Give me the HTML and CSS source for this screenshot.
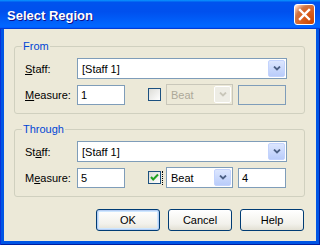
FILE: index.html
```html
<!DOCTYPE html>
<html lang="en">
<head>
  <meta charset="UTF-8" />
  <title>Select Region</title>
  <link rel="stylesheet" href="styles.css">
</head>
<body>
<div class="window">

  <div class="titlebar">
    <span class="title">Select Region</span>
    <span class="close">
      <svg width="13" height="13" viewBox="0 0 13 13"><path d="M2 2 L11 11 M11 2 L2 11" stroke="#fff" stroke-width="2.4" stroke-linecap="square"/></svg>
    </span>
  </div>

  <div class="client">

    <!-- From -->
    <fieldset class="group">
      <legend>From</legend>
      <div class="row">
        <label class="lbl"><u>S</u>taff:</label>
        <div class="combo wide">
          <span class="combo-text">[Staff 1]</span>
          <span class="combo-btn"><svg width="8" height="5" viewBox="0 0 8 5"><path d="M1 0.5 L4 3.5 L7 0.5" fill="none" stroke-width="1.8"/></svg></span>
        </div>
      </div>
      <div class="row">
        <label class="lbl"><u>M</u>easure:</label>
        <div class="field num">1</div>
        <span class="check"></span>
        <div class="combo beat disabled">
          <span class="combo-text">Beat</span>
          <span class="combo-btn"><svg width="8" height="5" viewBox="0 0 8 5"><path d="M1 0.5 L4 3.5 L7 0.5" fill="none" stroke-width="1.8"/></svg></span>
        </div>
        <div class="field num small disabled"></div>
      </div>
    </fieldset>

    <!-- Through -->
    <fieldset class="group second">
      <legend>Through</legend>
      <div class="row">
        <label class="lbl">St<u>a</u>ff:</label>
        <div class="combo wide">
          <span class="combo-text">[Staff 1]</span>
          <span class="combo-btn"><svg width="8" height="5" viewBox="0 0 8 5"><path d="M1 0.5 L4 3.5 L7 0.5" fill="none" stroke-width="1.8"/></svg></span>
        </div>
      </div>
      <div class="row">
        <label class="lbl">M<u>e</u>asure:</label>
        <div class="field num">5</div>
        <span class="check checked">
          <svg width="11" height="11" viewBox="0 0 11 11"><path d="M2 5 L4.2 7.5 L9 2.5" fill="none" stroke="#21A121" stroke-width="2"/></svg>
        </span>
        <span class="focus-mark"></span>
        <div class="combo beat">
          <span class="combo-text">Beat</span>
          <span class="combo-btn"><svg width="8" height="5" viewBox="0 0 8 5"><path d="M1 0.5 L4 3.5 L7 0.5" fill="none" stroke-width="1.8"/></svg></span>
        </div>
        <div class="field num small">4</div>
      </div>
    </fieldset>

    <div class="buttons">
      <button class="btn default">OK</button>
      <button class="btn">Cancel</button>
      <button class="btn">Help</button>
    </div>

  </div>
</div>
</body>
</html>
```

FILE: styles.css
```css
* {
  margin: 0;
  padding: 0;
  box-sizing: border-box;
}

body {
  font-family: 'Liberation Sans', Arial, sans-serif;
  font-size: 11px;
  color: #000;
  background: #fff;
}

.window {
  width: 320px;
  height: 245px;
  display: flex;
  flex-direction: column;
  background: #0055E5;
  box-shadow: inset 1px 0 0 #0831D9, inset -1px 0 0 #001EA0, inset 0 -1px 0 #001EA0;
}

/* Title bar */
.titlebar {
  height: 29px;
  display: flex;
  align-items: center;
  justify-content: space-between;
  padding: 1px 5px 0 7px;
  background: linear-gradient(180deg, #0997ff, #0053ee 8%, #0050ee 40%, #0066ff 88%, #0066ff 93%, #005bff 95%, #003dd7 96%, #003dd7);
}

.title {
  color: #fff;
  font-weight: 700;
  font-size: 13px;
  text-shadow: 1px 1px #0F1089;
}

.close {
  width: 21px;
  height: 21px;
  margin-top: -1px;
  border: 1px solid #fff;
  border-radius: 3px;
  display: flex;
  align-items: center;
  justify-content: center;
  background: radial-gradient(circle at 90% 90%, #cc4600 0, #dc6527 55%, #cd7546 70%, #ffccb2 90%, #fff 100%);
}

/* Client area */
.client {
  flex: 1;
  margin: 0 4px 4px 4px;
  background: #ECE9D8;
  padding: 11px 11px 0 10px;
}

.group {
  border: 1px solid #D0D0BF;
  border-radius: 3px;
  padding: 5px 16px 8px 10px;
}

.group.second {
  margin-top: 9px;
}

.group legend {
  color: #0046D5;
  padding: 0 1px;
  margin-left: -3px;
  line-height: 13px;
}

.row {
  display: flex;
  align-items: center;
  height: 21px;
}

.row + .row {
  margin-top: 5px;
}

.lbl {
  width: 52px;
}

/* Combo boxes */
.combo {
  height: 21px;
  border: 1px solid #7F9DB9;
  background: #fff;
  display: flex;
  align-items: center;
  justify-content: space-between;
  padding: 1px;
}

.combo.wide {
  width: 210px;
}

.combo.beat {
  width: 67px;
  margin-left: 5px;
}

.combo-text {
  padding-left: 3px;
}

.combo-btn {
  width: 17px;
  height: 17px;
  border: 1px solid #C3D3FD;
  border-radius: 2px;
  background: linear-gradient(180deg, #DCE6FE, #B9CCFA);
  display: flex;
  align-items: center;
  justify-content: center;
  stroke: #4D6185;
}

.combo.disabled {
  border-color: #C9C7BA;
  background: #ECE9D8;
  color: #ACA899;
}

.combo.disabled .combo-btn {
  border-color: #fff;
  background: #EEEDE5;
  stroke: #C9C7BA;
}

/* Text fields */
.field {
  height: 20px;
  border: 1px solid #7F9DB9;
  background: #fff;
  padding: 0 3px;
  display: flex;
  align-items: center;
}

.field.num {
  width: 48px;
}

.field.small {
  margin-left: 5px;
}

.field.disabled {
  background: #ECE9D8;
}

/* Checkbox */
.check {
  width: 13px;
  height: 13px;
  margin-left: 23px;
  border: 1px solid #1C5180;
  background: linear-gradient(135deg, #DCDCD7, #FFFFFF);
  display: flex;
  align-items: center;
  justify-content: center;
}

.focus-mark {
  width: 1px;
  height: 14px;
  margin-left: 1px;
  margin-right: -2px;
  border-right: 1px dotted #000;
}

/* Buttons */
.buttons {
  display: flex;
  justify-content: flex-end;
  gap: 8px;
  margin-top: 12px;
  padding-right: 1px;
}

.btn {
  width: 64px;
  height: 22px;
  font-family: inherit;
  font-size: 11px;
  color: #000;
  border: 1px solid #003C74;
  border-radius: 3px;
  background: linear-gradient(180deg, #FFFFFF, #F2F1EB 70%, #E3E0D4);
}

.btn.default {
  box-shadow: inset 0 0 0 1px #B6CDF2, inset 0 0 0 2px #CEE7FF;
}
```
